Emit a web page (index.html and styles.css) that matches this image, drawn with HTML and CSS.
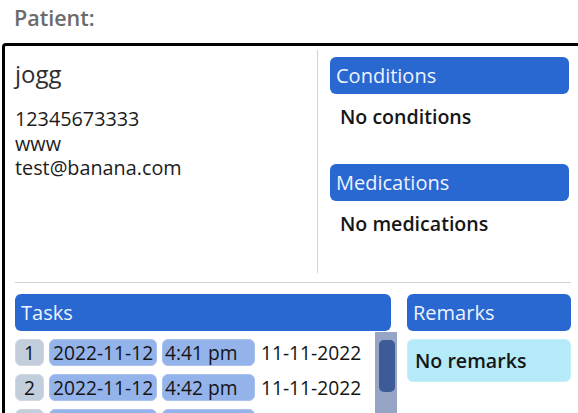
FILE: index.html
```html
<!DOCTYPE html>
<html lang="en">
<head>
<meta charset="utf-8">
<title>Patient</title>
<link rel="stylesheet" href="styles.css">
</head>
<body>
<div class="page">
  <h2 class="title">Patient:</h2>
  <div class="card">
    <div class="top">
      <div class="info">
        <div class="name">jogg</div>
        <div class="contact">
          <div>12345673333</div>
          <div>www</div>
          <div>test@banana.com</div>
        </div>
      </div>
      <div class="lists">
        <section class="group">
          <div class="bar">Conditions</div>
          <div class="empty">No conditions</div>
        </section>
        <section class="group">
          <div class="bar">Medications</div>
          <div class="empty">No medications</div>
        </section>
      </div>
    </div>
    <hr class="rule">
    <div class="bottom">
      <div class="tasks">
        <div class="bar bar-tasks">Tasks</div>
        <div class="task-list">
          <div class="rows">
            <div class="row"><span class="num">1</span><span class="pill pill-date">2022-11-12</span><span class="pill pill-time">4:41 pm</span><span class="created">11-11-2022</span></div>
            <div class="row"><span class="num">2</span><span class="pill pill-date">2022-11-12</span><span class="pill pill-time">4:42 pm</span><span class="created">11-11-2022</span></div>
            <div class="row"><span class="num">3</span><span class="pill pill-date">2022-11-12</span><span class="pill pill-time">4:43 pm</span><span class="created">11-11-2022</span></div>
            <div class="row"><span class="num">4</span><span class="pill pill-date">2022-11-12</span><span class="pill pill-time">4:44 pm</span><span class="created">11-11-2022</span></div>
          </div>
          <div class="scroll"><div class="thumb"></div></div>
        </div>
      </div>
      <div class="remarks">
        <div class="bar">Remarks</div>
        <div class="remark-box">No remarks</div>
      </div>
    </div>
  </div>
</div>
</body>
</html>
```
FILE: styles.css
```css
html, body {
  margin: 0;
  padding: 0;
  overflow: hidden;
  background: #ffffff;
}

body {
  font-family: "Open Sans", "Noto Sans", sans-serif;
  color: #333333;
  width: 578px;
  height: 413px;
}

.page {
  padding-left: 2px;
}

.title {
  margin: 4px 0 11px 12px;
  font-size: 21.5px;
  font-weight: 600;
  line-height: 28px;
  color: #6b6b6b;
}

.card {
  box-sizing: border-box;
  width: 582px;
  height: 400px;
  border: 3px solid #000000;
  border-radius: 4px;
  padding: 4px 10px 0 10px;
  overflow: hidden;
}

.top {
  display: flex;
  height: 223px;
}

.info {
  box-sizing: border-box;
  width: 303px;
  border-right: 1px solid #d2d2d2;
  padding-top: 7px;
}

.name {
  font-size: 24px;
  line-height: 33px;
  color: #2e2e2e;
  margin-bottom: 17px;
}

.contact {
  font-size: 19.8px;
  line-height: 24.5px;
  color: #1c1c1c;
}

.lists {
  flex: 1;
  padding: 7px 2px 0 12px;
}

.group {
  margin-bottom: 34px;
}

.bar {
  height: 37px;
  line-height: 37px;
  padding: 0 6px;
  border-radius: 6px;
  background: #2967d1;
  color: #eef3fc;
  font-size: 20px;
}

.empty {
  margin-top: 10px;
  padding-left: 10px;
  font-size: 19.6px;
  line-height: 26px;
  font-weight: 600;
  color: #161616;
}

.rule {
  margin: 9px 0 11px 0;
  height: 0;
  border: 0;
  border-top: 1px solid #d2d2d2;
}

.bottom {
  display: grid;
  grid-template-columns: 382px 164px;
  column-gap: 10px;
}

.bar-tasks {
  margin-right: 6px;
}

.task-list {
  display: flex;
  margin-top: 1px;
  height: 200px;
}

.rows {
  flex: 1;
  padding-top: 7px;
  display: flex;
  flex-direction: column;
  gap: 8px;
}

.row {
  display: flex;
  align-items: center;
  gap: 5px;
  height: 27px;
  font-size: 19.2px;
  line-height: 25px;
  color: #141414;
}

.num {
  box-sizing: border-box;
  width: 29px;
  height: 27px;
  text-align: center;
  border: 1px solid #d0d9e3;
  border-radius: 6px;
  background: #c2cedb;
}

.pill {
  box-sizing: border-box;
  height: 27px;
  border: 1px solid #a9c1ef;
  border-radius: 6px;
  background: #94b3ea;
}

.pill-date {
  width: 108px;
  padding-left: 3px;
}

.pill-time {
  width: 93px;
  padding-left: 2px;
}

.created {
  padding-left: 1px;
}

.scroll {
  width: 22px;
  background: #96a5c6;
}

.thumb {
  width: 16px;
  height: 52px;
  margin: 8px 2px 0 4px;
  border-radius: 5px;
  background: #3d5b96;
}

.remark-box {
  box-sizing: border-box;
  margin-top: 8px;
  height: 43px;
  line-height: 41px;
  padding-left: 7px;
  border: 1px solid #c4effa;
  border-radius: 6px;
  background: #b5eaf8;
  font-size: 19.6px;
  font-weight: 600;
  color: #161616;
}
```
